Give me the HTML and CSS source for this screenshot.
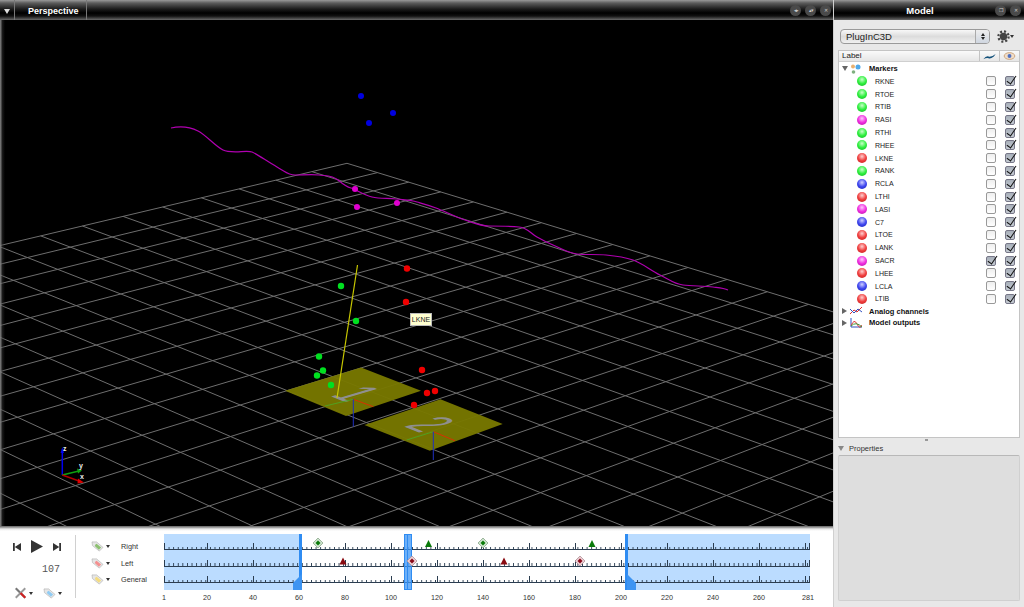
FILE: index.html
```html
<!DOCTYPE html>
<html lang="en">
<head>
<meta charset="utf-8">
<title>Mokka</title>
<link rel="stylesheet" href="styles.css">
</head>
<body>
<div class="app">
  <div class="main">
    <div class="titlebar view-title">
      <span class="menu-arrow"></span>
      <span class="view-name">Perspective</span>
      <span class="title-buttons">
        <span class="round-btn">&#9666;&#9656;</span>
        <span class="round-btn">&#9652;&#9662;</span>
        <span class="round-btn">&#10005;</span>
      </span>
    </div>
    <div class="viewport">
      <svg class="scene" viewBox="0 20 833 507">
        <g id="grid" class="grid"></g>
        <polygon class="plate" points="285,390.7 361,367.5 421,390.7 346,416"/>
        <polygon class="plate" points="364.4,425 440.4,399.3 502.7,424 429.8,450.7"/>
        <text class="plate-num" transform="matrix(3.2 1.3 -5.4 1.6 338 399)">1</text>
        <text class="plate-num" transform="matrix(3.2 1.3 -5.4 1.6 412 429.5)">2</text>
        <g class="thin">
          <line class="ax-r" x1="353.3" y1="399.3" x2="373.3" y2="406.7"/>
          <line class="ax-g" x1="353.3" y1="399.3" x2="325" y2="406"/>
          <line class="ax-b" x1="353.3" y1="399.3" x2="353.3" y2="426.7"/>
          <line class="ax-r" x1="433.3" y1="431.7" x2="455" y2="440.7"/>
          <line class="ax-g" x1="433.3" y1="431.7" x2="406.7" y2="440"/>
          <line class="ax-b" x1="433.3" y1="431.7" x2="433.3" y2="460"/>
        </g>
        <line class="grf" x1="357.5" y1="265" x2="337" y2="398"/>
        <path class="trajectory" d="M171 128 C180 126 190 127 198 131 S215 146 223 150 S247 150 252 152 S268 162 277 167 S288 175 295 175 S313 174 319 175 S332 175 338 180 S347 187 351 188 S364 195 372 197 S388 198 396 199 S410 200 417 202 S428 205 436 208 S456 217 465 220 S480 226 489 226 S510 226 519 227 S530 233 537 237 S546 242 553 245 S568 253 577 254 S596 254 606 255 S624 257 633 260 S650 270 660 275 S674 284 683 285 S704 286 713 287 S724 288 728 290"/>
        <g class="dots-blue">
          <circle cx="361" cy="96" r="3"/><circle cx="393" cy="113" r="3"/><circle cx="369" cy="123" r="3"/>
        </g>
        <g class="dots-magenta">
          <circle cx="355" cy="189" r="3"/><circle cx="357" cy="207" r="3"/><circle cx="397" cy="203" r="3"/>
        </g>
        <g class="dots-red">
          <circle cx="407" cy="268.5" r="3.2"/><circle cx="406" cy="302" r="3.2"/><circle cx="422" cy="370" r="3.2"/><circle cx="435" cy="391" r="3.2"/><circle cx="427" cy="393" r="3.2"/><circle cx="414" cy="405" r="3.2"/>
        </g>
        <g class="dots-green">
          <circle cx="341" cy="286" r="3.2"/><circle cx="356" cy="321" r="3.2"/><circle cx="319" cy="356.5" r="3.2"/><circle cx="323" cy="370.5" r="3.2"/><circle cx="317" cy="375.5" r="3.2"/><circle cx="331" cy="385" r="3.2"/>
        </g>
        <g class="axes">
          <line class="ax-b2" x1="62.3" y1="475" x2="62.3" y2="451"/>
          <polygon class="fill-b" points="60.5,453 64,453 62.3,447"/>
          <line class="ax-g2" x1="62.3" y1="475" x2="79" y2="471"/>
          <polygon class="fill-g" points="77,468.5 82,470.5 78,473.5"/>
          <line class="ax-r2" x1="62.3" y1="475" x2="79" y2="481"/>
          <polygon class="fill-r" points="78,478.5 84,482.5 77.5,483.5"/>
          <text class="axis-label" x="63" y="451">z</text>
          <text class="axis-label" x="79" y="468">y</text>
          <text class="axis-label" x="80" y="479">x</text>
        </g>
      </svg>
      <div class="edge-shade"></div>
      <div class="tooltip">LKNE</div>
    </div>
    <div class="timeline">
      <div class="controls">
        <div class="transport">
          <svg class="ic-skip" viewBox="0 0 9 10"><rect x="0" y="0.5" width="2" height="9"/><polygon points="9,0.5 9,9.5 2,5"/></svg>
          <svg class="ic-play" viewBox="0 0 12 13"><polygon points="0,0 12,6.5 0,13"/></svg>
          <svg class="ic-skip" viewBox="0 0 9 10"><rect x="7" y="0.5" width="2" height="9"/><polygon points="0,0.5 0,9.5 7,5"/></svg>
        </div>
        <div class="time">107</div>
        <div class="tools">
          <span class="tool">
            <svg class="ic-tools" viewBox="0 0 15 13"><line class="tool-grey" x1="2" y1="1" x2="13" y2="12"/><line class="tool-grey2" x1="13" y1="1" x2="2" y2="12"/><line class="tool-red" x1="7.5" y1="6.5" x2="13" y2="12"/></svg>
            <span class="caret"></span>
          </span>
          <span class="tool">
            <svg class="ic-tag" viewBox="0 0 14 12"><polygon class="tag-body" points="1,1 6,1 13,7 9,11 1.5,5"/><polygon class="tag-blue" points="5,3.500 6,3 11,7 8.500,9.500 4,5.500"/></svg>
            <span class="caret"></span>
          </span>
        </div>
      </div>
      <div class="divider"></div>
      <div class="tag-col">
        <div class="tag-row">
          <svg class="ic-tag" viewBox="0 0 14 12"><polygon class="tag-body" points="1,1 6,1 13,7 9,11 1.5,5"/><polygon class="tag-green" points="5,3.500 6,3 11,7 8.500,9.500 4,5.500"/></svg>
          <span class="caret"></span><span class="tag-label">Right</span>
        </div>
        <div class="tag-row">
          <svg class="ic-tag" viewBox="0 0 14 12"><polygon class="tag-body" points="1,1 6,1 13,7 9,11 1.5,5"/><polygon class="tag-red" points="5,3.500 6,3 11,7 8.500,9.500 4,5.500"/></svg>
          <span class="caret"></span><span class="tag-label">Left</span>
        </div>
        <div class="tag-row">
          <svg class="ic-tag" viewBox="0 0 14 12"><polygon class="tag-body" points="1,1 6,1 13,7 9,11 1.5,5"/><polygon class="tag-yellow" points="5,3.500 6,3 11,7 8.500,9.500 4,5.500"/></svg>
          <span class="caret"></span><span class="tag-label">General</span>
        </div>
      </div>
      <div class="ruler-col">
        <div class="tracks">
          <div class="range range-left"></div>
          <div class="range range-right"></div>
          <div class="track"></div>
          <div class="track"></div>
          <div class="track"></div>
          <div class="handle handle-left"><svg viewBox="0 0 9 16"><polygon points="9,0 9,16 0,16 0,9"/></svg></div>
          <div class="handle handle-right"><svg viewBox="0 0 9 16"><polygon points="0,0 0,16 9,16 9,9"/></svg></div>
          <div class="current"></div>
          <svg class="events" viewBox="0 0 646 56">
            <g class="ev-diamond-g">
              <polygon class="halo" points="154,4 159,9 154,14 149,9"/><polygon class="core" points="154,6.5 156.5,9 154,11.5 151.5,9"/>
              <polygon class="halo" points="319,4 324,9 319,14 314,9"/><polygon class="core" points="319,6.5 321.5,9 319,11.5 316.5,9"/>
            </g>
            <g class="ev-diamond-r">
              <polygon class="halo" points="248,22 253,27 248,32 243,27"/><polygon class="core" points="248,24.5 250.5,27 248,29.5 245.5,27"/>
              <polygon class="halo" points="416,22 421,27 416,32 411,27"/><polygon class="core" points="416,24.5 418.5,27 416,29.5 413.5,27"/>
            </g>
            <polygon class="tri-g" points="264.5,6 268,13 261,13"/>
            <polygon class="tri-g" points="428,6 431.5,13 424.5,13"/>
            <polygon class="tri-r" points="179,23.5 182.5,30.5 175.5,30.5"/>
            <polygon class="tri-r" points="340,23.5 343.5,30.5 336.5,30.5"/>
          </svg>
        </div>
        <div class="ruler">
          <span class="end">1</span><span>20</span><span>40</span><span>60</span><span>80</span><span>100</span><span>120</span><span>140</span><span>160</span><span>180</span><span>200</span><span>220</span><span>240</span><span>260</span><span class="end">281</span>
        </div>
      </div>
    </div>
  </div>
  <aside class="panel">
    <div class="titlebar panel-title">
      <span class="panel-name">Model</span>
      <span class="round-btn panel-btn">&#10064;</span>
      <span class="round-btn panel-btn">&#10005;</span>
    </div>
    <div class="acq-row">
      <div class="combo"><span class="combo-text">PlugInC3D</span><span class="stepper"><i class="up"></i><i class="down"></i></span></div>
      <svg class="ic-gear" viewBox="0 0 14 14"><circle class="gear-body" cx="7" cy="7" r="4"/><circle class="gear-teeth" cx="7" cy="7" r="5.5"/></svg>
      <span class="caret"></span>
    </div>
    <div class="tree">
      <div class="tree-head">
        <span class="th-label">Label</span>
        <span class="th-col"><svg class="ic-traj" viewBox="0 0 14 8"><path d="M0 7 Q3 3 6 4 T14 1 L12 4 Q8 7 6 6 T0 7Z"/></svg></span>
        <span class="th-col"><svg class="ic-eye" viewBox="0 0 14 9"><ellipse class="eye-o" cx="7" cy="4.5" rx="6" ry="3.8"/><circle class="eye-i" cx="7" cy="4.5" r="2.2"/></svg></span>
      </div>
      <div class="group-row markers"><span class="tri-open"></span><svg class="ic-group" viewBox="0 0 12 10"><circle class="c-o" cx="3" cy="2.5" r="2"/><circle class="c-b" cx="8" cy="3" r="2.5"/><circle class="c-g" cx="3.5" cy="8" r="1.8"/></svg><b>Markers</b></div>
      <div class="row"><i class="ball green"></i><span class="name">RKNE</span><i class="box"></i><i class="box on"></i></div>
      <div class="row"><i class="ball green"></i><span class="name">RTOE</span><i class="box"></i><i class="box on"></i></div>
      <div class="row"><i class="ball green"></i><span class="name">RTIB</span><i class="box"></i><i class="box on"></i></div>
      <div class="row"><i class="ball magenta"></i><span class="name">RASI</span><i class="box"></i><i class="box on"></i></div>
      <div class="row"><i class="ball green"></i><span class="name">RTHI</span><i class="box"></i><i class="box on"></i></div>
      <div class="row"><i class="ball green"></i><span class="name">RHEE</span><i class="box"></i><i class="box on"></i></div>
      <div class="row"><i class="ball red"></i><span class="name">LKNE</span><i class="box"></i><i class="box on"></i></div>
      <div class="row"><i class="ball green"></i><span class="name">RANK</span><i class="box"></i><i class="box on"></i></div>
      <div class="row"><i class="ball blue"></i><span class="name">RCLA</span><i class="box"></i><i class="box on"></i></div>
      <div class="row"><i class="ball red"></i><span class="name">LTHI</span><i class="box"></i><i class="box on"></i></div>
      <div class="row"><i class="ball magenta"></i><span class="name">LASI</span><i class="box"></i><i class="box on"></i></div>
      <div class="row"><i class="ball blue"></i><span class="name">C7</span><i class="box"></i><i class="box on"></i></div>
      <div class="row"><i class="ball red"></i><span class="name">LTOE</span><i class="box"></i><i class="box on"></i></div>
      <div class="row"><i class="ball red"></i><span class="name">LANK</span><i class="box"></i><i class="box on"></i></div>
      <div class="row"><i class="ball magenta"></i><span class="name">SACR</span><i class="box on"></i><i class="box on"></i></div>
      <div class="row"><i class="ball red"></i><span class="name">LHEE</span><i class="box"></i><i class="box on"></i></div>
      <div class="row"><i class="ball blue"></i><span class="name">LCLA</span><i class="box"></i><i class="box on"></i></div>
      <div class="row"><i class="ball red"></i><span class="name">LTIB</span><i class="box"></i><i class="box on"></i></div>
      <div class="group-row"><span class="tri-closed"></span><svg class="ic-group" viewBox="0 0 12 10"><path class="p-r" d="M0 8 L4 4 L7 6 L12 1"/><path class="p-b" d="M0 3 L4 7 L8 3 L12 6"/></svg><b>Analog channels</b></div>
      <div class="group-row"><span class="tri-closed"></span><svg class="ic-group" viewBox="0 0 12 10"><path class="p-b" d="M1 0 V9 H12"/><path class="p-r" d="M1 8 Q4 0 7 6 T12 7"/><path class="p-g" d="M1 8 Q6 3 12 9"/></svg><b>Model outputs</b></div>
    </div>
    <div class="grip"></div>
    <div class="props-head"><span class="tri-props"></span>Properties</div>
    <div class="props-box"></div>
  </aside>
</div>
<script src="grid.js"></script>
</body>
</html>
```
FILE: styles.css
```css
* { box-sizing: border-box; }
html, body { margin: 0; padding: 0; width: 1024px; height: 607px; overflow: hidden; background: #e8e8e8; }
body { font-family: "Liberation Sans", Arial, sans-serif; color: #222; }
.app { display: flex; width: 1024px; height: 607px; }
.main { width: 834px; display: flex; flex-direction: column; border-right: 1px solid #d0d0d0; }
.panel { width: 190px; display: flex; flex-direction: column; background: #e8e8e8; }

.titlebar { height: 20px; flex: none; display: flex; align-items: center; color: #fff; font-weight: bold;
  background: linear-gradient(#9a9a9a 0, #5c5c5c 3px, #1c1c1c 9px, #000 13px, #111 16px, #6a6a6a 20px); }
.menu-arrow { width: 15px; height: 20px; border-right: 1px solid #777; position: relative; flex: none; }
.menu-arrow::after { content: ""; position: absolute; left: 4px; top: 9px; border: 3px solid transparent; border-top: 5px solid #ddd; border-bottom: 0; }
.view-name { width: 72px; height: 20px; line-height: 22px; padding-left: 13px; font-size: 9px; border-right: 1px solid #777; flex: none; }
.title-buttons { margin-left: auto; margin-right: 2px; display: flex; gap: 4px; }
.round-btn { width: 11px; height: 11px; border-radius: 50%; background: #4a4a4a; color: #ccc; font-size: 5px; line-height: 11px; text-align: center; font-weight: normal; letter-spacing: -1px; display: block; }

.viewport { flex: 1; background: #000; position: relative; overflow: hidden; border-bottom: 1px solid #777; }
.scene { display: block; width: 833px; height: 507px; }
.edge-shade { position: absolute; left: 0; top: 0; bottom: 0; width: 5px; background: linear-gradient(90deg, #888, rgba(60,60,60,.4) 50%, transparent); }
.grid line { stroke: #6e6e6e; stroke-width: 1; }
.plate { fill: #787800; fill-opacity: .96; }
.plate-num { font-family: "Liberation Sans", Arial, sans-serif; font-size: 10px; fill: #8f8f8f; text-anchor: middle; }
.thin line { stroke-width: 1; }
.ax-r { stroke: #d83000; }
.ax-g { stroke: #50a020; }
.ax-b { stroke: #2030c0; }
.grf { stroke: #c8c800; stroke-width: 1.2; }
.trajectory { fill: none; stroke: #b000b0; stroke-width: 1.2; }
.dots-blue { fill: #0000e0; }
.dots-magenta { fill: #e000d0; }
.dots-red { fill: #f00000; }
.dots-green { fill: #00e020; }
.ax-b2 { stroke: #0000f0; stroke-width: 1.5; }
.ax-g2 { stroke: #10a010; stroke-width: 1.5; }
.ax-r2 { stroke: #b00000; stroke-width: 1.5; }
.fill-b { fill: #0000f0; }
.fill-g { fill: #10a010; }
.fill-r { fill: #e00000; }
.axis-label { font-family: "Liberation Sans", Arial, sans-serif; font-size: 7px; font-weight: bold; fill: #eee; }
.tooltip { position: absolute; left: 410px; top: 293px; width: 22px; height: 13px; background: #ffffcf; border: 1px solid #bbb; color: #222; font-size: 7px; line-height: 11px; text-align: center; }

.timeline { height: 80px; flex: none; display: flex; background: linear-gradient(#8a8a8a 0, #e8e8e8 2px, #fff 4px); padding-top: 7px; }
.controls { width: 75px; flex: none; display: flex; flex-direction: column; }
.transport { display: flex; align-items: center; height: 13px; margin-top: 6px; padding-left: 13px; gap: 10px; }
.ic-skip { width: 8px; height: 10px; fill: #333; display: block; }
.ic-play { width: 12px; height: 13px; fill: #333; display: block; }
.time { font-family: "Liberation Mono", monospace; font-size: 10px; line-height: 12px; height: 12px; color: #555; text-align: right; padding-right: 15px; margin-top: 11px; }
.tools { display: flex; gap: 10px; padding-left: 14px; margin-top: 11px; }
.tool { display: flex; align-items: center; gap: 2px; }
.ic-tools { width: 13px; height: 12px; display: block; }
.tool-grey { stroke: #777; stroke-width: 2.4; }
.tool-grey2 { stroke: #999; stroke-width: 2.2; }
.tool-red { stroke: #d02020; stroke-width: 2.4; }
.caret { width: 0; height: 0; border: 2.5px solid transparent; border-top: 3.5px solid #333; border-bottom: 0; flex: none; display: block; }
.ic-tag { width: 13px; height: 11px; display: block; flex: none; }
.tag-body { fill: #e6e6e6; stroke: #b0b0b0; stroke-width: .7; }
.tag-blue { fill: #90ccf4; }
.tag-green { fill: #8cc070; }
.tag-red { fill: #f49090; }
.tag-yellow { fill: #f4dc80; }
.divider { width: 1px; flex: none; background: #d0d0d0; margin: 1px 0 9px; }
.tag-col { width: 88px; flex: none; padding: 4px 0 0 15px; }
.tag-row { height: 16.7px; display: flex; align-items: center; gap: 2px; }
.tag-label { font-size: 7.3px; margin-left: 9px; color: #333; }
.ruler-col { width: 669px; flex: none; }
.tracks { position: relative; width: 646px; height: 56px; }
.range { position: absolute; top: 0; bottom: 0; background: #bbdcff; }
.range-left { left: 0; width: 136px; }
.range-right { left: 462px; width: 184px; }
.track { position: relative; height: 16.4px; border-bottom: 1px solid #2b3d50;
  background-image:
    linear-gradient(90deg, #2b3d50 0 1px, transparent 1px),
    linear-gradient(90deg, #2b3d50 0 1px, transparent 1px),
    linear-gradient(90deg, #2b3d50 0 1px, transparent 1px),
    linear-gradient(90deg, #2b3d50 0 1px, transparent 1px);
  background-size: 1px 6px, 1px 6px, 46px 6px, 4.6px 2.5px;
  background-repeat: no-repeat, no-repeat, repeat-x, repeat-x;
  background-position: 0 bottom, 645px bottom, 43px bottom, 0 bottom; }
.handle { position: absolute; top: 0; bottom: 0; width: 9px; }
.handle svg { position: absolute; bottom: 0; left: 0; width: 9px; height: 16px; fill: #3d94f2; display: block; }
.handle-left { left: 129px; border-right: 3px solid #2f8cf2; }
.handle-right { left: 461px; border-left: 3px solid #2f8cf2; }
.handle-right svg { left: -1px; }
.current { position: absolute; left: 240px; top: 0; bottom: 0; width: 8px; background: rgba(60,150,245,.75); border: 1px solid #2f8cf2; }
.current::after { content: ""; position: absolute; left: 2px; top: 0; bottom: 0; width: 1px; background: #2f8cf2; }
.events { position: absolute; left: 0; top: 0; width: 646px; height: 56px; display: block; }
.ev-diamond-g .halo { fill: #cfe4cf; stroke: #8aa88a; stroke-width: .8; }
.ev-diamond-g .core { fill: #0a7a0a; }
.ev-diamond-r .halo { fill: #ecd0d4; stroke: #b09098; stroke-width: .8; }
.ev-diamond-r .core { fill: #8a0a1a; }
.tri-g { fill: #0a7a0a; }
.tri-r { fill: #8a0a10; }
.ruler { display: grid; grid-template-columns: repeat(15, 46px); margin: 3px 0 0 -26px; font-size: 7.2px; line-height: 10px; color: #333; }
.ruler span { text-align: center; }
.ruler .end { padding-left: 6px; }

.panel-title { justify-content: flex-end; position: relative; padding-right: 3px; gap: 4px; }
.panel-name { position: absolute; left: 0; right: 18px; top: 0; text-align: center; font-size: 9.5px; line-height: 22px; }
.panel-btn { position: relative; }
.acq-row { display: flex; align-items: center; height: 16px; margin-top: 8px; padding-left: 6px; }
.combo { width: 150px; height: 15px; border: 1px solid #9a9a9a; border-radius: 4px; background: linear-gradient(#f8f8f8, #dcdcdc 50%, #f0f0f0); display: flex; align-items: center; }
.combo-text { flex: 1; padding-left: 5px; font-size: 9.5px; color: #222; }
.stepper { width: 14px; height: 13px; border-left: 1px solid #aaa; display: flex; flex-direction: column; align-items: center; justify-content: center; gap: 1px; background: linear-gradient(#eee, #cfd6e0); border-radius: 0 3px 3px 0; }
.stepper i { display: block; width: 0; height: 0; border-left: 2px solid transparent; border-right: 2px solid transparent; }
.stepper .up { border-bottom: 3px solid #222; }
.stepper .down { border-top: 3px solid #222; }
.ic-gear { width: 13px; height: 13px; margin-left: 7px; display: block; }
.gear-body { fill: #444; }
.gear-teeth { fill: none; stroke: #444; stroke-width: 2.4; stroke-dasharray: 2.2 2.1; }
.tree { width: 182px; height: 388px; margin: 6px 0 0 4px; background: #fff; border: 1px solid #c4c4c4; flex: none; }
.tree-head { height: 11px; display: flex; background: linear-gradient(#fafafa, #e6e6e6); border-bottom: 1px solid #cfcfcf; }
.th-label { flex: 1; font-size: 8px; line-height: 10px; padding-left: 3px; color: #222; }
.th-col { width: 20px; border-left: 1px solid #c4c4c4; display: flex; align-items: center; justify-content: center; }
.ic-traj { width: 13px; height: 7px; fill: #12507a; display: block; }
.ic-eye { width: 13px; height: 8px; display: block; }
.eye-o { fill: #f0ddc8; stroke: #c09060; stroke-width: .8; }
.eye-i { fill: #5070c0; }
.group-row { height: 11.5px; display: flex; align-items: center; font-size: 7.5px; padding-left: 3px; color: #111; }
.group-row.markers { height: 13px; }
.group-row b { margin-left: 7px; }
.tri-open { width: 0; height: 0; border: 3px solid transparent; border-top: 5px solid #666; border-bottom: 0; margin-right: 2px; flex: none; }
.tri-closed { width: 0; height: 0; border: 3px solid transparent; border-left: 5px solid #666; border-right: 0; margin-right: 3px; flex: none; }
.ic-group { width: 12px; height: 10px; display: block; flex: none; fill: none; }
.c-o { fill: #e8b070; }
.c-b { fill: #50a8e8; }
.c-g { fill: #80b080; }
.p-r { stroke: #e03030; stroke-width: 1; }
.p-b { stroke: #3050c0; stroke-width: 1; }
.p-g { stroke: #40a040; stroke-width: 1; }
.row { height: 12.8px; display: flex; align-items: center; padding-left: 18px; }
.ball { display: block; width: 10px; height: 10px; border-radius: 50%; flex: none; }
.ball.green { background: radial-gradient(circle at 50% 35%, #c8ffc8, #30f040 50%, #10b020); }
.ball.magenta { background: radial-gradient(circle at 50% 35%, #ffc8ff, #f030e0 50%, #b010a0); }
.ball.red { background: radial-gradient(circle at 50% 35%, #ffd0d0, #f04040 50%, #c01818); }
.ball.blue { background: radial-gradient(circle at 50% 35%, #d0d0ff, #4048f0 50%, #1820b0); }
.name { width: 111px; margin-left: 8px; font-size: 7px; color: #222; flex: none; }
.box { display: block; width: 10px; height: 10px; border: 1px solid #999; border-radius: 2px; background: linear-gradient(#eee, #fff); position: relative; flex: none; margin-right: 9px; }
.box.on { background: linear-gradient(#a8b0ba, #c4cad2); border-color: #778; }
.box.on::after { content: ""; position: absolute; left: 3px; top: -3px; width: 4px; height: 9px; border-right: 1.6px solid #111; border-bottom: 1.6px solid #111; transform: rotate(35deg); }
.grip { height: 4px; margin-top: 0; position: relative; flex: none; }
.grip::after { content: ""; position: absolute; left: 91px; top: 1px; width: 3px; height: 2px; background: #999; }
.props-head { height: 13px; display: flex; align-items: center; font-size: 7.5px; color: #333; padding-left: 4px; flex: none; }
.tri-props { width: 0; height: 0; border: 3px solid transparent; border-top: 5px solid #888; border-bottom: 0; margin-right: 5px; }
.props-box { width: 182px; height: 146px; margin-left: 4px; background: #dedede; border: 1px solid #d0d0d0; border-top-color: #b8b8b8; border-radius: 2px; flex: none; }
```
FILE: grid.js
```js
(function () {
  var NS = "http://www.w3.org/2000/svg";
  var grid = document.getElementById("grid");
  var A = [347, 163.3], VU = [-2239, -627], VV = [3327, -543];

  function along(v, s, k) {
    var f = 1 / (1 - s * k);
    return [v[0] + (A[0] - v[0]) * f, v[1] + (A[1] - v[1]) * f];
  }
  function addLine(p, v) {
    var l = document.createElementNS(NS, "line");
    l.setAttribute("x1", p[0]);
    l.setAttribute("y1", p[1]);
    l.setAttribute("x2", p[0] + (p[0] - v[0]) * 1.2);
    l.setAttribute("y2", p[1] + (p[1] - v[1]) * 1.2);
    grid.appendChild(l);
  }
  for (var i = 0; i <= 40; i++) {
    addLine(along(VU, 0.01165, i), VV);
    addLine(along(VV, 0.01165, i), VU);
  }
})();
```
